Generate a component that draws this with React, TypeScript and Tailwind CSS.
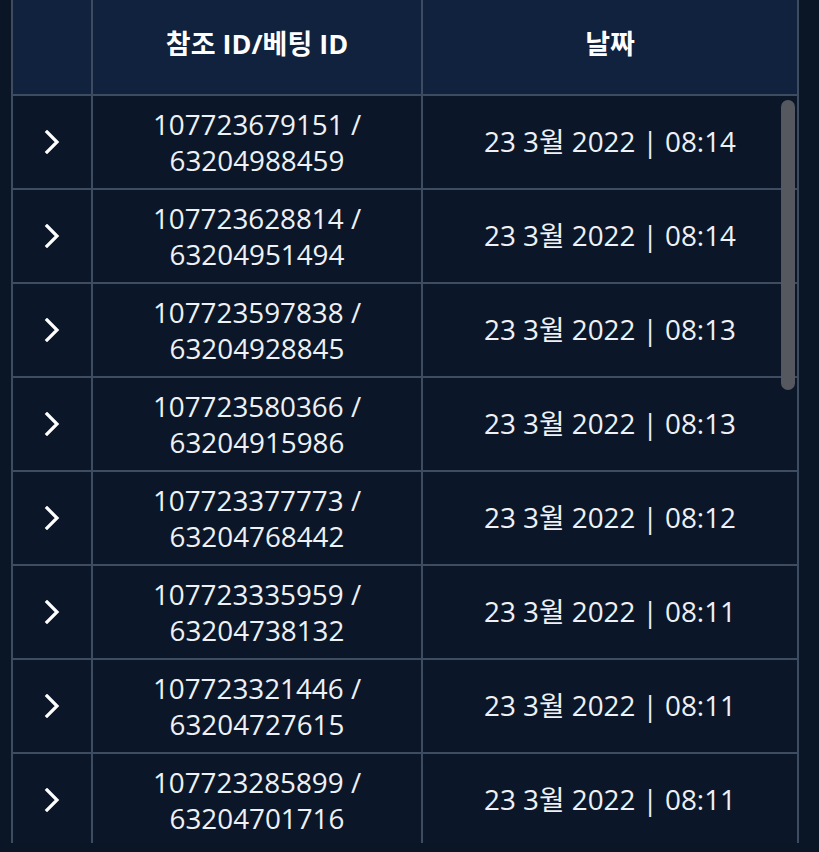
import React from "react";

const rows = [
  ["107723679151", "63204988459", "08:14"],
  ["107723628814", "63204951494", "08:14"],
  ["107723597838", "63204928845", "08:13"],
  ["107723580366", "63204915986", "08:13"],
  ["107723377773", "63204768442", "08:12"],
  ["107723335959", "63204738132", "08:11"],
  ["107723321446", "63204727615", "08:11"],
  ["107723285899", "63204701716", "08:11"],
];

const font = { fontFamily: '"Open Sans", "Noto Sans CJK KR", sans-serif' };

function Chevron() {
  return (
    <svg width="16" height="24" viewBox="0 0 16 24" fill="none">
      <polyline
        points="3,2 13,12 3,22"
        stroke="#ffffff"
        strokeWidth="3.2"
        strokeLinecap="square"
        strokeLinejoin="miter"
      />
    </svg>
  );
}

export default function App() {
  return (
    <div
      className="w-[819px] h-[852px] bg-[#0a1525] pl-[11px] overflow-hidden"
      style={font}
    >
      <div className="w-[788px] h-[843px] border-x-2 border-[#3d4c61] flex flex-col">
        <div className="grid grid-cols-[80px_330px_1fr] h-[96px] bg-[#10223d] border-b-2 border-[#3d4c61] text-white font-bold text-[27px]">
          <div className="border-r-2 border-[#3d4c61]" />
          <div className="border-r-2 border-[#3d4c61] flex items-center justify-center pb-[6px]">
            참조 ID/베팅 ID
          </div>
          <div className="flex items-center justify-center pb-[6px]">날짜</div>
        </div>
        <div className="relative flex-1 overflow-hidden bg-[#0b1729]">
          {rows.map((r, i) => (
            <div
              key={i}
              className="grid grid-cols-[80px_330px_1fr] h-[94px] border-b-2 border-[#3d4c61] text-[#eef1f5] text-[27.8px] leading-[36px]"
            >
              <div className="border-r-2 border-[#3d4c61] flex items-center justify-center">
                <Chevron />
              </div>
              <div className="border-r-2 border-[#3d4c61] flex flex-col items-center justify-center">
                <span>{r[0]} /</span>
                <span>{r[1]}</span>
              </div>
              <div className="flex items-center justify-center pb-[2px]">
                23 3월 2022&nbsp;|&nbsp;{r[2]}
              </div>
            </div>
          ))}
          <div className="absolute right-[2px] top-[4px] w-[14px] h-[290px] rounded-full bg-[#55595f]" />
        </div>
      </div>
    </div>
  );
}
